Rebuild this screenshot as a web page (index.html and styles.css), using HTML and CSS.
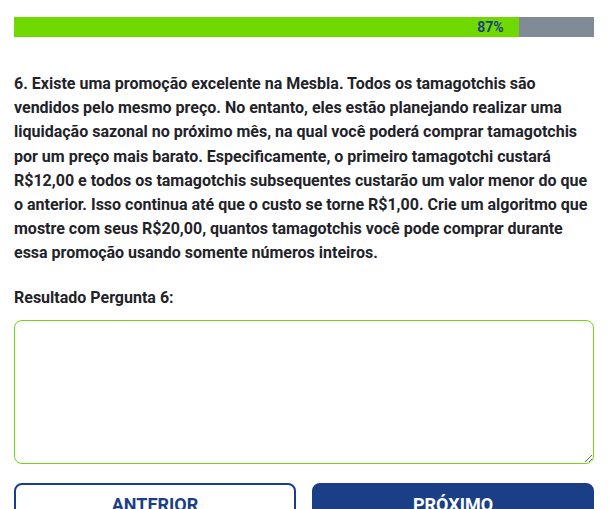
FILE: index.html
```html
<!DOCTYPE html>
<html lang="pt-BR">
<head>
<meta charset="utf-8">
<link rel="stylesheet" href="styles.css">
</head>
<body>
<div class="page">
  <div class="progress">
    <div class="progress-fill" style="width: 87%"><span class="progress-label">87%</span></div>
  </div>
  <p class="question">6. Existe uma promoção excelente na Mesbla. Todos os tamagotchis são vendidos pelo mesmo preço. No entanto, eles estão planejando realizar uma liquidação sazonal no próximo mês, na qual você poderá comprar tamagotchis por um preço mais barato. Especificamente, o primeiro tamagotchi custará R$12,00 e todos os tamagotchis subsequentes custarão um valor menor do que o anterior. Isso continua até que o custo se torne R$1,00. Crie um algoritmo que mostre com seus R$20,00, quantos tamagotchis você pode comprar durante essa promoção usando somente números inteiros.</p>
  <label class="answer-label" for="answer">Resultado Pergunta 6:</label>
  <textarea id="answer" class="answer"></textarea>
  <div class="actions">
    <button class="btn btn-outline">ANTERIOR</button>
    <button class="btn btn-solid">PRÓXIMO</button>
  </div>
</div>
</body>
</html>
```
FILE: styles.css
```css
html, body {
  margin: 0;
  padding: 0;
  background: #ffffff;
}
body {
  font-family: Roboto, "Liberation Sans", sans-serif;
  color: #1f2329;
}
.page {
  width: 580px;
  padding: 17px 20px 0 14px;
}
.progress {
  height: 20px;
  background: #808b97;
  display: flex;
}
.progress-fill {
  background: #6fd900;
  height: 100%;
  display: flex;
  align-items: center;
  justify-content: flex-end;
  box-sizing: border-box;
  padding-right: 15px;
}
.progress-label {
  font-size: 14px;
  font-weight: 700;
  color: #1b3f86;
}
.question {
  margin: 35px 0 0 0;
  font-size: 16px;
  line-height: 24.2px;
  font-weight: 700;
}
.answer-label {
  display: block;
  margin-top: 20px;
  font-size: 16px;
  line-height: 24px;
  font-weight: 700;
}
.answer {
  display: block;
  margin-top: 10px;
  width: 100%;
  height: 144px;
  box-sizing: border-box;
  border: 1px solid #74d60c;
  border-radius: 8px;
  outline: none;
  resize: vertical;
  font-family: inherit;
}
.actions {
  display: grid;
  grid-template-columns: 1fr 1fr;
  gap: 16px;
  margin-top: 19px;
}
.btn {
  height: 44px;
  border-radius: 8px;
  font-family: Roboto, "Liberation Sans", sans-serif;
  font-size: 18px;
  font-weight: 700;
  cursor: pointer;
  padding: 0;
}
.btn-outline {
  background: #ffffff;
  border: 2px solid #1b3f86;
  color: #1b3f86;
}
.btn-solid {
  background: #1b3f86;
  border: 2px solid #1b3f86;
  color: #ffffff;
}
```
